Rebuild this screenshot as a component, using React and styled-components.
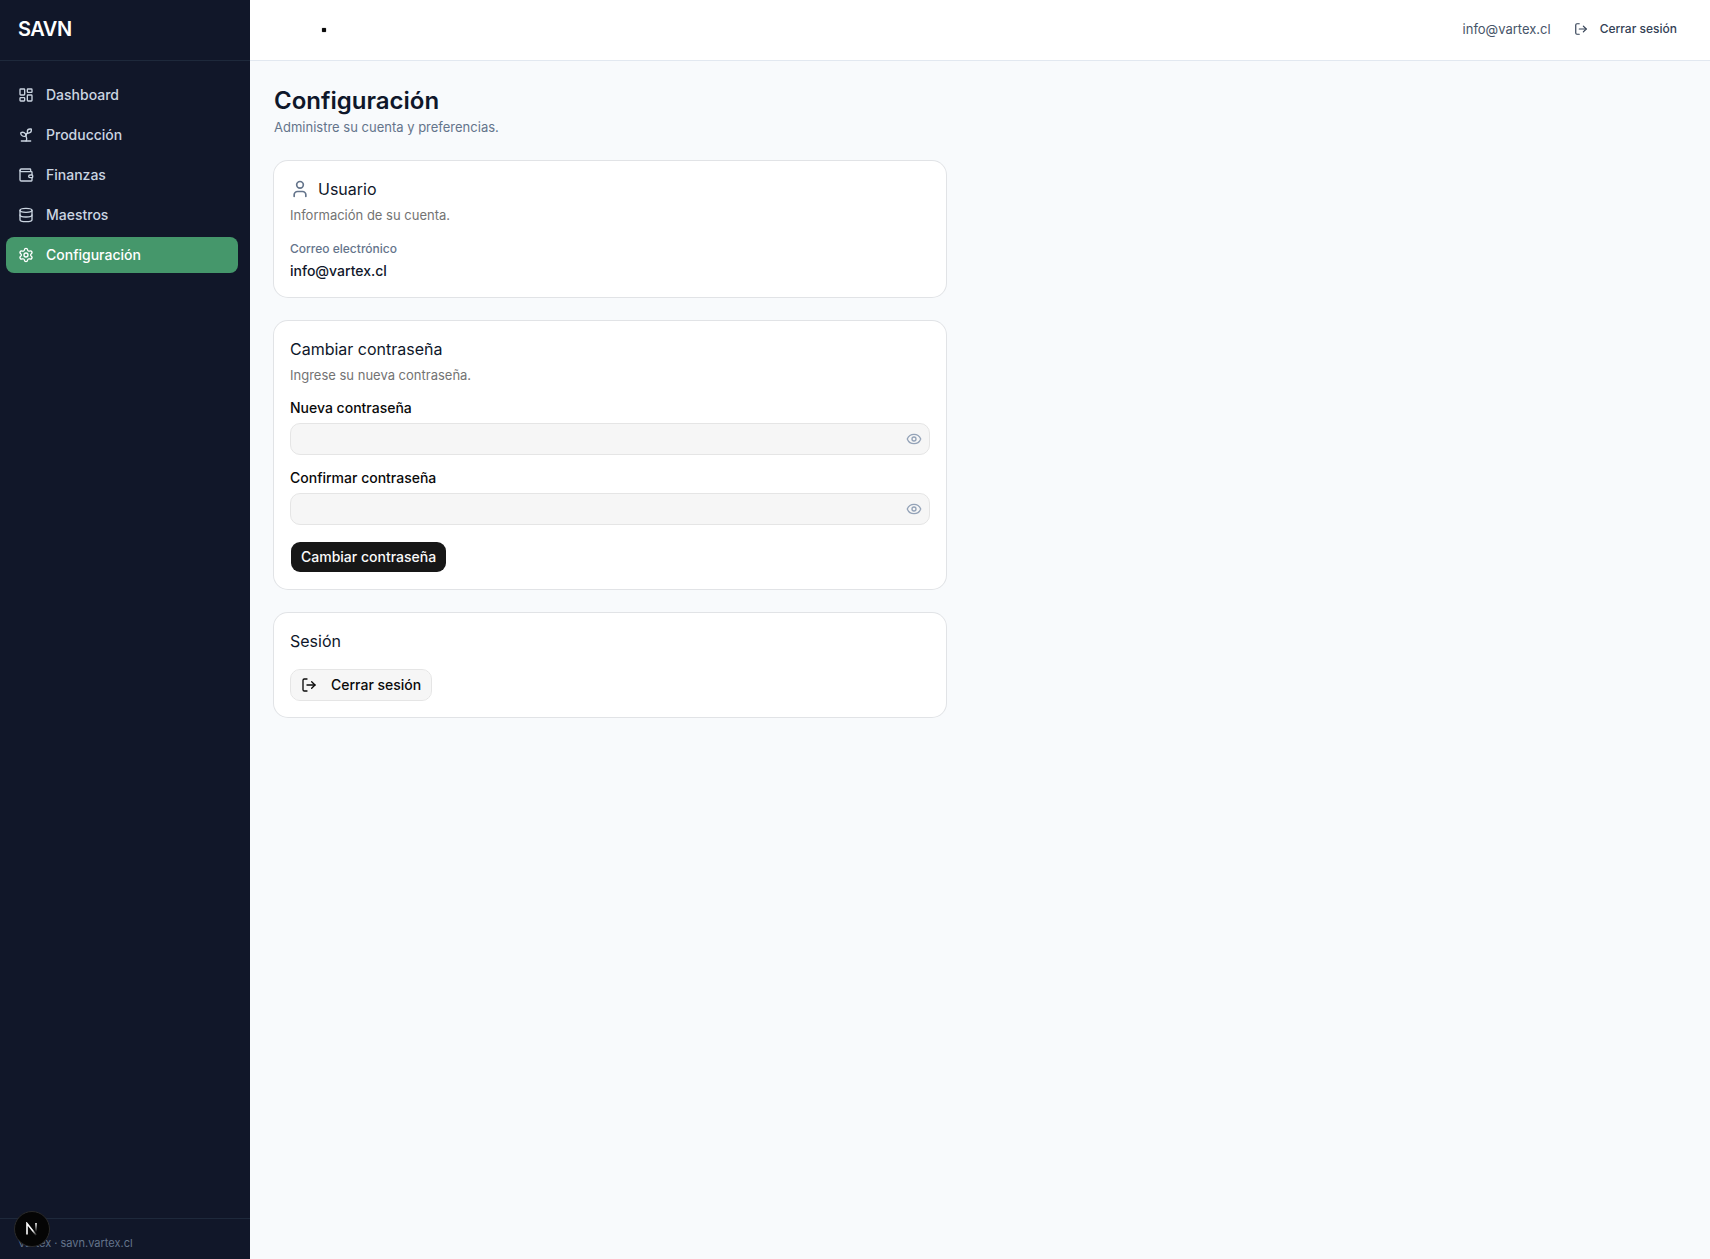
import React, { useState } from "react";
import styled, { createGlobalStyle } from "styled-components";
import {
  LayoutDashboard,
  Sprout,
  Wallet,
  Database,
  Settings,
  LogOut,
  User,
  Eye,
} from "lucide-react";

const GlobalStyle = createGlobalStyle`
  *, *::before, *::after { box-sizing: border-box; }
  body {
    margin: 0;
    background: #f8fafc;
    color: #0a0a0a;
    font-family: Inter, "Liberation Sans", sans-serif;
    font-size: 14px;
    line-height: 20px;
  }
  h1, h2, p { margin: 0; }
  button, input { font: inherit; color: inherit; }
  svg { flex-shrink: 0; }
`;

const Shell = styled.div`
  display: flex;
  min-height: 100vh;
`;

const Sidebar = styled.aside`
  display: flex;
  flex-direction: column;
  flex: none;
  width: 250px;
  background: #111729;
`;

const Brand = styled.div`
  display: flex;
  align-items: center;
  height: 61px;
  padding: 0 18px 2px;
  border-bottom: 1px solid #1e293b;
  color: #fff;
  font-size: 20px;
  line-height: 28px;
  font-weight: 600;
  letter-spacing: -0.025em;
`;

const Nav = styled.nav`
  display: flex;
  flex: 1;
  flex-direction: column;
  gap: 4px;
  padding: 16px 12px 16px 6px;
`;

const NavLink = styled.a`
  display: flex;
  align-items: center;
  gap: 12px;
  height: 36px;
  padding: 0 12px;
  border-radius: 8px;
  background: ${({ $active }) => ($active ? "#45976b" : "transparent")};
  color: ${({ $active }) => ($active ? "#fff" : "#cbd5e1")};
  font-weight: 500;
  text-decoration: none;
`;

const SidebarFooter = styled.footer`
  padding: 16px 18px 8px;
  border-top: 1px solid #1e293b;
  color: #64748b;
  font-size: 11px;
  line-height: 16px;
`;

const DevBadge = styled.button`
  position: fixed;
  left: 14px;
  bottom: 12px;
  display: grid;
  place-items: center;
  width: 36px;
  height: 36px;
  padding: 0;
  border: 1px solid #2b2b2b;
  border-radius: 50%;
  background: #050505;
`;

const Content = styled.div`
  display: flex;
  flex: 1;
  flex-direction: column;
  min-width: 0;
`;

const TopBar = styled.header`
  display: flex;
  align-items: center;
  justify-content: space-between;
  height: 61px;
  padding: 0 24px 0 72px;
  border-bottom: 1px solid #e2e8f0;
  background: #fff;
`;

const Dot = styled.span`
  width: 4px;
  height: 4px;
  border-radius: 1px;
  background: #0a0a0a;
  box-shadow: 0 0 1px #0a0a0a;
`;

const Account = styled.div`
  display: flex;
  align-items: center;
  gap: 14px;
  padding-bottom: 2px;
  color: #475569;
  font-size: 13px;
`;

const GhostButton = styled.button`
  display: flex;
  align-items: center;
  gap: 12px;
  height: 28px;
  padding: 0 9px;
  border: 0;
  border-radius: 8px;
  background: transparent;
  color: #334155;
  font-size: 12px;
  font-weight: 500;
`;

const Page = styled.main`
  display: flex;
  flex-direction: column;
  gap: 24px;
  padding: 24px;
`;

const PageTitle = styled.h1`
  color: #0f172a;
  font-size: 24px;
  line-height: 32px;
  font-weight: 600;
`;

const PageLead = styled.p`
  color: #64748b;
  font-size: 13px;
`;

const Card = styled.section`
  display: flex;
  flex-direction: column;
  gap: 16px;
  max-width: 672px;
  padding: 16px;
  border-radius: 14px;
  background: #fff;
  box-shadow: 0 0 0 1px #e1e3e6;
`;

const CardHead = styled.div`
  display: flex;
  flex-direction: column;
  gap: 4px;
`;

const CardTitle = styled.h2`
  display: flex;
  align-items: center;
  gap: 8px;
  color: #0f172a;
  font-size: 16px;
  line-height: 24px;
  font-weight: 400;

  svg { color: #64748b; }
`;

const CardText = styled.p`
  color: #737373;
  font-size: 13px;
`;

const Details = styled.dl`
  display: flex;
  flex-direction: column;
  gap: 4px;
  margin: 0;
`;

const Term = styled.dt`
  color: #64748b;
  font-size: 12px;
  line-height: 16px;
  font-weight: 500;
`;

const Value = styled.dd`
  margin: 0;
  color: #0f172a;
  font-weight: 500;
`;

const Form = styled.form`
  display: flex;
  flex-direction: column;
  align-items: flex-start;
  gap: 16px;
`;

const Field = styled.div`
  display: flex;
  flex-direction: column;
  gap: 8px;
  width: 100%;
`;

const Label = styled.label`
  line-height: 14px;
  font-weight: 500;
`;

const InputBox = styled.div`
  display: flex;
  align-items: center;
  height: 32px;
  border: 1px solid #e5e5e5;
  border-radius: 10px;
  background: #f6f6f6;
`;

const Input = styled.input`
  flex: 1;
  min-width: 0;
  height: 100%;
  padding: 0 10px;
  border: 0;
  outline: 0;
  background: transparent;
`;

const EyeButton = styled.button`
  display: grid;
  place-items: center;
  width: 30px;
  height: 100%;
  padding: 0;
  border: 0;
  background: transparent;
  color: #94a3b8;
`;

const Button = styled.button`
  display: flex;
  align-items: center;
  align-self: flex-start;
  gap: 14px;
  height: 32px;
  padding: 0 10px;
  border: 1px solid ${({ $primary }) => ($primary ? "transparent" : "#e5e5e5")};
  border-radius: 10px;
  background: ${({ $primary }) => ($primary ? "#171717" : "#f6f6f6")};
  background-clip: padding-box;
  color: ${({ $primary }) => ($primary ? "#fafafa" : "#0a0a0a")};
  font-weight: 500;
`;

const links = [
  { label: "Dashboard", icon: LayoutDashboard },
  { label: "Producción", icon: Sprout },
  { label: "Finanzas", icon: Wallet },
  { label: "Maestros", icon: Database },
  { label: "Configuración", icon: Settings, active: true },
];

function PasswordField({ id, label }) {
  const [visible, setVisible] = useState(false);
  return (
    <Field>
      <Label htmlFor={id}>{label}</Label>
      <InputBox>
        <Input id={id} type={visible ? "text" : "password"} />
        <EyeButton
          type="button"
          aria-label="Mostrar contraseña"
          onClick={() => setVisible(!visible)}
        >
          <Eye size={16} />
        </EyeButton>
      </InputBox>
    </Field>
  );
}

export default function App() {
  return (
    <>
      <GlobalStyle />
      <Shell>
        <Sidebar>
          <Brand>SAVN</Brand>
          <Nav>
            {links.map(({ label, icon: Icon, active }) => (
              <NavLink key={label} href="#" $active={active}>
                <Icon size={16} />
                {label}
              </NavLink>
            ))}
          </Nav>
          <SidebarFooter>Vartex · savn.vartex.cl</SidebarFooter>
        </Sidebar>
        <Content>
          <TopBar>
            <Dot />
            <Account>
              <span>info@vartex.cl</span>
              <GhostButton type="button">
                <LogOut size={14} />
                Cerrar sesión
              </GhostButton>
            </Account>
          </TopBar>
          <Page>
            <div>
              <PageTitle>Configuración</PageTitle>
              <PageLead>Administre su cuenta y preferencias.</PageLead>
            </div>
            <Card>
              <CardHead>
                <CardTitle>
                  <User size={20} />
                  Usuario
                </CardTitle>
                <CardText>Información de su cuenta.</CardText>
              </CardHead>
              <Details>
                <Term>Correo electrónico</Term>
                <Value>info@vartex.cl</Value>
              </Details>
            </Card>
            <Card>
              <CardHead>
                <CardTitle>Cambiar contraseña</CardTitle>
                <CardText>Ingrese su nueva contraseña.</CardText>
              </CardHead>
              <Form onSubmit={(event) => event.preventDefault()}>
                <PasswordField id="new-password" label="Nueva contraseña" />
                <PasswordField id="confirm-password" label="Confirmar contraseña" />
                <Button type="submit" $primary>
                  Cambiar contraseña
                </Button>
              </Form>
            </Card>
            <Card>
              <CardTitle>Sesión</CardTitle>
              <Button type="button">
                <LogOut size={16} />
                Cerrar sesión
              </Button>
            </Card>
          </Page>
        </Content>
      </Shell>
      <DevBadge type="button" aria-label="Next.js">
        <svg width="14" height="14" viewBox="0 0 14 14" fill="none">
          <defs>
            <linearGradient id="stem" x1="0" y1="1" x2="0" y2="10" gradientUnits="userSpaceOnUse">
              <stop stopColor="#fff" />
              <stop offset="1" stopColor="#fff" stopOpacity="0" />
            </linearGradient>
            <linearGradient id="slash" x1="8" y1="8" x2="12" y2="13" gradientUnits="userSpaceOnUse">
              <stop stopColor="#fff" />
              <stop offset="1" stopColor="#fff" stopOpacity="0" />
            </linearGradient>
          </defs>
          <path d="M2 12.5V1.5L11.5 13.5" stroke="url(#slash)" strokeWidth="1.6" />
          <rect x="10.2" y="1" width="1.6" height="9" fill="url(#stem)" />
        </svg>
      </DevBadge>
    </>
  );
}
